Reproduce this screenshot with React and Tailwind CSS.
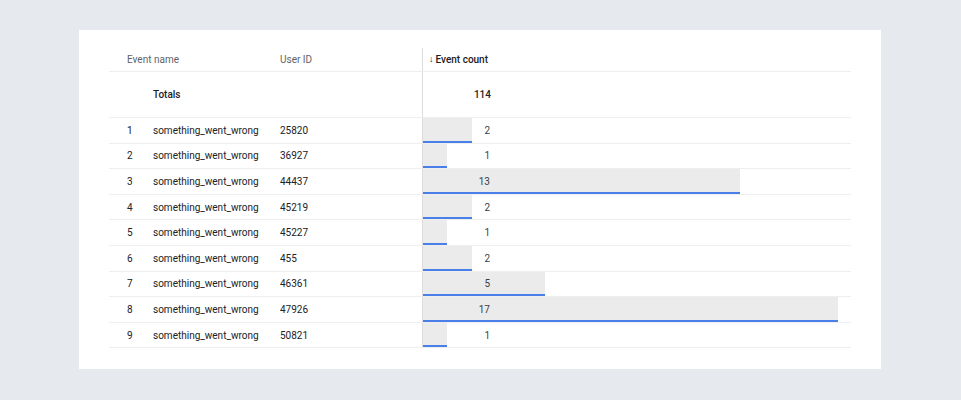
const rows = [
  [1, '25820', 2], [2, '36927', 1], [3, '44437', 13], [4, '45219', 2], [5, '45227', 1],
  [6, '455', 2], [7, '46361', 5], [8, '47926', 17], [9, '50821', 1],
]

export default function App() {
  return (
    <div className="w-[961px] h-[400px] bg-[#e6eaee] pt-[30px] pl-[79px]" style={{ fontFamily: 'Roboto, sans-serif' }}>
      <div className="w-[802px] h-[339px] bg-white pt-[18px] px-[30px] overflow-hidden">
        <div className="flex h-[24px] items-center text-[10px] text-[#5f6368] border-b border-[#eeeeee]">
          <div className="w-[171px] pl-[18px]">Event name</div>
          <div className="w-[142px]">User ID</div>
          <div className="flex-1 h-full flex items-center border-l border-[#dadce0] pl-[6px] text-[#202124] font-medium">
            <span className="text-[9px] mr-[2px]">↓</span>Event count
          </div>
        </div>
        <div className="flex h-[46px] items-center text-[10px] text-[#202124] font-medium border-b border-[#eeeeee]">
          <div className="w-[44px]" />
          <div className="w-[269px]">Totals</div>
          <div className="flex-1 h-full flex items-center border-l border-[#dadce0]">
            <div className="w-[68px] text-right">114</div>
          </div>
        </div>
        {rows.map(([i, id, n]) => (
          <div key={i} className="flex h-[25.6px] items-center text-[10px] text-[#202124] border-b border-[#eeeeee]">
            <div className="w-[44px] pl-[18px]">{i}</div>
            <div className="w-[127px]">something_went_wrong</div>
            <div className="w-[142px]">{id}</div>
            <div className="flex-1 h-full relative border-l border-[#dadce0]">
              <div className="absolute left-0 top-0 bottom-0 bg-[#ebebeb] border-b-2 border-[#4a7ee8]" style={{ width: n * 24.4 }} />
              <div className="relative w-[67px] h-full flex items-center justify-end text-[#3c4043]">{n}</div>
            </div>
          </div>
        ))}
      </div>
    </div>
  )
}
